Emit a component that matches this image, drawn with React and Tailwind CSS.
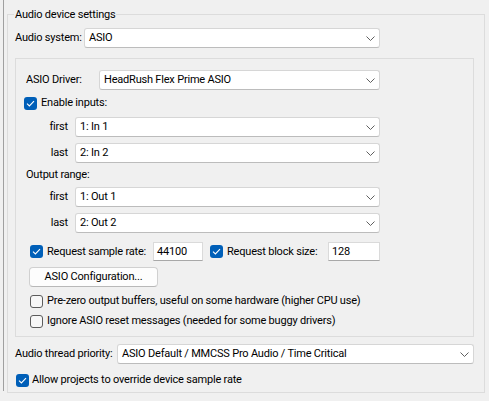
import React from "react";

const Chevron = () => (
  <svg width="9" height="5" viewBox="0 0 9 5" className="shrink-0">
    <path d="M0.5 0.5 L4.5 4.5 L8.5 0.5" fill="none" stroke="#5f5f5f" strokeWidth="1" />
  </svg>
);

const Select = ({ value, className = "" }) => (
  <div
    className={`h-[20px] bg-white border border-[#d6d6d6] border-b-[#bcbcbc] rounded-[3px] flex items-center justify-between pl-[4px] pr-[4px] ${className}`}
  >
    <span className="whitespace-nowrap">{value}</span>
    <Chevron />
  </div>
);

const Check = ({ checked }) =>
  checked ? (
    <span className="w-[13px] h-[13px] rounded-[3px] bg-[#005fb8] flex items-center justify-center shrink-0">
      <svg width="9" height="7" viewBox="0 0 9 7">
        <path d="M1 3.6 L3.4 6 L8 1.2" fill="none" stroke="#ffffff" strokeWidth="1.1" />
      </svg>
    </span>
  ) : (
    <span className="w-[13px] h-[13px] rounded-[3px] border border-[#5c5c5c] bg-[#f7f7f7] shrink-0" />
  );

const TextBox = ({ value, className = "" }) => (
  <div className={`h-[19px] bg-white border border-[#dadada] border-b-[#a8a8a8] flex items-center pl-[3px] ${className}`}>
    {value}
  </div>
);

const RangeRow = ({ label, value, className = "" }) => (
  <div className={`flex items-center h-[20px] ${className}`}>
    <span className="w-[49px] pr-[7px] text-right">{label}</span>
    <Select value={value} className="w-[305px]" />
  </div>
);

const App = () => {
  return (
    <div className="w-[489px] h-[401px] bg-[#f0f0f0] overflow-hidden text-[11px] leading-[16px] tracking-[-0.2px] text-black font-['Roboto',sans-serif]">
      <div className="ml-[3px] h-[391px] border-l border-[#a0a0a0] pl-[3px] pt-[14px]">
        <div className="relative w-[478px] h-[379px] border border-[#dcdcdc] pl-[7px] pt-[13px]">
          <span className="absolute left-[6px] -top-[8px] px-[1px] bg-[#f0f0f0]">Audio device settings</span>

          <div className="flex items-center h-[20px]">
            <span className="w-[69px]">Audio system:</span>
            <Select value="ASIO" className="w-[296px]" />
          </div>

          {/* ASIO driver box */}
          <div className="mt-[10px] w-[459px] h-[279px] border border-[#dcdcdc] pl-[10px]">
            <div className="mt-[11px] flex items-center h-[20px]">
              <span className="w-[73px]">ASIO Driver:</span>
              <Select value="HeadRush Flex Prime ASIO" className="w-[281px]" />
            </div>

            <div className="mt-[5px] -ml-[2px] flex items-center gap-[4px] h-[16px]">
              <Check checked />
              <span>Enable inputs:</span>
            </div>
            <RangeRow label="first" value="1: In 1" className="mt-[6px]" />
            <RangeRow label="last" value="2: In 2" className="mt-[6px]" />

            <div className="mt-[4px] h-[16px]">Output range:</div>
            <RangeRow label="first" value="1: Out 1" className="mt-[4px]" />
            <RangeRow label="last" value="2: Out 2" className="mt-[6px]" />

            <div className="mt-[9px] ml-[4px] flex items-center h-[19px]">
              <Check checked />
              <span className="ml-[4px] w-[106px]">Request sample rate:</span>
              <TextBox value="44100" className="w-[50px]" />
              <span className="ml-[7px]">
                <Check checked />
              </span>
              <span className="ml-[4px] w-[101px]">Request block size:</span>
              <TextBox value="128" className="w-[52px]" />
            </div>

            <button className="mt-[6px] ml-[3px] w-[129px] h-[20px] bg-[#fdfdfd] border border-[#d0d0d0] border-b-[#b8b8b8] rounded-[4px] flex items-center justify-center">
              ASIO Configuration...
            </button>

            <div className="mt-[6px] ml-[4px] flex items-center gap-[4px] h-[16px]">
              <Check />
              <span>Pre-zero output buffers, useful on some hardware (higher CPU use)</span>
            </div>
            <div className="mt-[4px] ml-[4px] flex items-center gap-[4px] h-[16px]">
              <Check />
              <span>Ignore ASIO reset messages (needed for some buggy drivers)</span>
            </div>
          </div>

          <div className="mt-[7px] flex items-center h-[20px]">
            <span className="w-[102px]">Audio thread priority:</span>
            <Select value="ASIO Default / MMCSS Pro Audio / Time Critical" className="w-[357px]" />
          </div>

          <div className="mt-[8px] ml-[1px] flex items-center gap-[3px] h-[16px]">
            <Check checked />
            <span>Allow projects to override device sample rate</span>
          </div>
        </div>
      </div>
    </div>
  );
};

export default App;
